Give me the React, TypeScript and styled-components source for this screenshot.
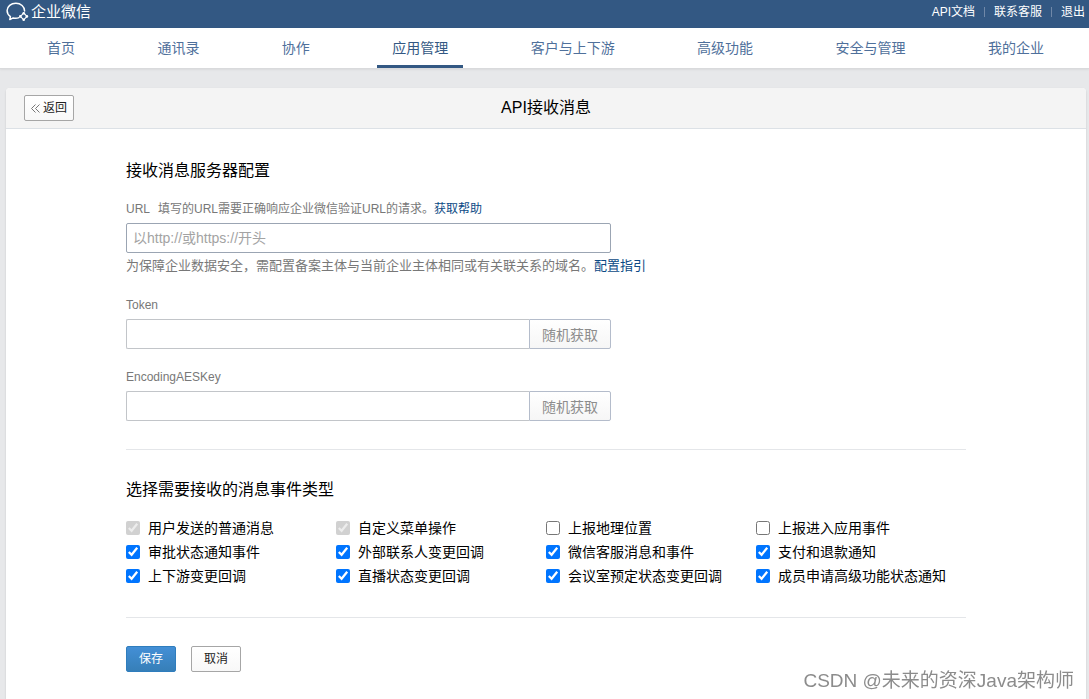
import React from "react";
import styled, { createGlobalStyle, css } from "styled-components";

const GlobalStyle = createGlobalStyle`
  *, *::before, *::after { box-sizing: border-box; }
  body {
    margin: 0;
    background: #e7e8ea;
    color: #000;
    font-family: "Liberation Sans", "Noto Sans CJK SC", sans-serif;
    font-size: 14px;
  }
  button, input { font-family: inherit; }
  a { text-decoration: none; }
`;

const Page = styled.div`
  min-height: 100vh;
  display: flex;
  flex-direction: column;
`;

const TopBar = styled.header`
  height: 28px;
  padding: 0 4px 4px 6px;
  display: flex;
  align-items: center;
  justify-content: space-between;
  background: #335883;
  color: #fff;
`;

const Brand = styled.a`
  display: flex;
  align-items: center;
  gap: 2px;
  color: #fff;
  font-size: 15px;
  line-height: 24px;
`;

const TopLinks = styled.nav`
  display: flex;
  align-items: center;
  gap: 9px;
  font-size: 12px;
  line-height: 24px;
`;

const TopLink = styled.a`
  color: #fff;
`;

const Separator = styled.span`
  width: 1px;
  height: 10px;
  background: #7088a8;
`;

const MainNav = styled.nav`
  height: 41px;
  padding: 0 30px 0 32px;
  display: flex;
  justify-content: space-between;
  background: #fff;
  border-bottom: 1px solid #d9dadc;
  box-shadow: 0 1px 2px rgba(0, 0, 0, 0.06);
`;

const NavLink = styled.a<{ $active?: boolean }>`
  padding: 0 15px;
  line-height: 40px;
  color: #4f709b;
  white-space: nowrap;
  ${(p) =>
    p.$active &&
    css`
      color: #335883;
      box-shadow: inset 0 -3px #335883;
    `}
`;

const Panel = styled.main`
  flex: 1;
  margin: 19px 3px 0 6px;
  background: #fff;
  border-radius: 4px 4px 0 0;
  box-shadow: 0 1px 2px rgba(0, 0, 0, 0.15);
`;

const PanelHeader = styled.div`
  height: 41px;
  padding: 0 18px;
  display: grid;
  grid-template-columns: 1fr auto 1fr;
  align-items: center;
  background: #f4f4f4;
  border-bottom: 1px solid #dce1e6;
  border-radius: 4px 4px 0 0;
`;

const Title = styled.h1`
  margin: 0;
  font-size: 16px;
  font-weight: 400;
  line-height: 24px;
`;

const Button = styled.button<{ $primary?: boolean }>`
  width: 50px;
  height: 26px;
  padding: 0;
  display: flex;
  align-items: center;
  justify-content: center;
  gap: 3px;
  font-size: 12px;
  line-height: 24px;
  border-radius: 2px;
  color: ${(p) => (p.$primary ? "#fff" : "#222")};
  border: 1px solid ${(p) => (p.$primary ? "#2f7dbd" : "#a6a6a6")};
  background: ${(p) =>
    p.$primary
      ? "linear-gradient(#438fd6, #367fb8)"
      : "linear-gradient(#fff, #f8f8f8)"};
`;

const Content = styled.form`
  max-width: 840px;
  margin: 0 auto;
  padding: 30px 0 24px;
`;

const Section = styled.section`
  padding-bottom: 28px;
  margin-bottom: 28px;
  border-bottom: 1px solid #e4e6e9;
`;

const SectionTitle = styled.h2`
  margin: 0;
  font-size: 16px;
  font-weight: 400;
  line-height: 24px;
`;

const Field = styled.div`
  margin-top: 18px;
`;

const UrlField = styled.div`
  margin: 16px 0 19px;
`;

const FieldHead = styled.div`
  margin-bottom: 4px;
  display: flex;
  font-size: 12px;
  line-height: 20px;
  color: #787878;
`;

const FieldLabel = styled.label`
  margin-right: 8px;
`;

const TextLink = styled.a`
  color: #0c4a85;
`;

const InputRow = styled.div`
  max-width: 485px;
  display: flex;
`;

const TextInput = styled.input<{ $joined?: boolean }>`
  flex: 1;
  min-width: 0;
  height: 30px;
  padding: 0 6px;
  font-size: 14px;
  background: #fff;
  border: 1px solid ${(p) => (p.$joined ? "#c2c5c9" : "#9ba5b3")};
  border-radius: ${(p) => (p.$joined ? "2px 0 0 2px" : "2px")};
  ${(p) => p.$joined && "border-right: 0;"}
  &::placeholder { color: #a3a3a3; opacity: 1; }
`;

const JoinedButton = styled.button`
  width: 82px;
  height: 30px;
  padding: 0;
  font-size: 14px;
  color: #8d8d8d;
  border: 1px solid #b4bccb;
  border-radius: 0 2px 2px 0;
  background: linear-gradient(#fff, #f6f6f6);
`;

const Hint = styled.p`
  margin: 3px 0 0;
  font-size: 13px;
  line-height: 20px;
  color: #787878;
`;

const EventGrid = styled.div`
  margin-top: 14px;
  padding-bottom: 1px;
  display: grid;
  grid-template-columns: repeat(4, 1fr);
`;

const EventOption = styled.label`
  display: flex;
  align-items: center;
  gap: 8px;
  line-height: 24px;
  white-space: nowrap;
`;

const Checkbox = styled.input`
  width: 14px;
  height: 14px;
  margin: 0;
  flex: none;
`;

const Actions = styled.div`
  display: flex;
  gap: 15px;
`;

const Watermark = styled.div`
  position: fixed;
  right: 15px;
  bottom: 4px;
  font-size: 19px;
  line-height: 28px;
  color: #8c8c8c;
  pointer-events: none;
`;

const navItems = ["首页", "通讯录", "协作", "应用管理", "客户与上下游", "高级功能", "安全与管理", "我的企业"];

const events = [
  { name: "用户发送的普通消息", checked: true, disabled: true },
  { name: "自定义菜单操作", checked: true, disabled: true },
  { name: "上报地理位置", checked: false },
  { name: "上报进入应用事件", checked: false },
  { name: "审批状态通知事件", checked: true },
  { name: "外部联系人变更回调", checked: true },
  { name: "微信客服消息和事件", checked: true },
  { name: "支付和退款通知", checked: true },
  { name: "上下游变更回调", checked: true },
  { name: "直播状态变更回调", checked: true },
  { name: "会议室预定状态变更回调", checked: true },
  { name: "成员申请高级功能状态通知", checked: true },
];

const LogoIcon = () => (
  <svg width="23" height="20" viewBox="0 0 23 20" fill="none" stroke="#fff" aria-hidden="true">
    <path
      d="M18.6 9C18.6 4.6 14.8 1.2 9.9 1.2C5 1.2 1.1 4.4 1.1 8.6C1.1 11.1 2.4 13.3 4.4 14.7L3.8 17.6L7.2 15.9C9.4 16.4 11.3 16.2 13 15.6"
      strokeWidth="1.5"
      strokeLinecap="round"
      strokeLinejoin="round"
    />
    <path d="M17.7 11L21 14.4L17.7 17.8L14.4 14.4Z" strokeWidth="1.1" />
    <g fill="#fff" stroke="none">
      <circle cx="17.7" cy="11.2" r="1.3" />
      <circle cx="20.9" cy="14.4" r="1.3" />
      <circle cx="17.7" cy="17.8" r="1.3" />
      <circle cx="14.3" cy="14.4" r="1.3" />
    </g>
  </svg>
);

const BackIcon = () => (
  <svg width="9" height="9" viewBox="0 0 9 9" fill="none" stroke="#777" aria-hidden="true">
    <path d="M4.5 0.5L0.5 4.5L4.5 8.5M8.5 0.5L4.5 4.5L8.5 8.5" />
  </svg>
);

const SecretField = ({ id, label }: { id: string; label: string }) => (
  <Field>
    <FieldHead>
      <FieldLabel htmlFor={id}>{label}</FieldLabel>
    </FieldHead>
    <InputRow>
      <TextInput id={id} type="text" $joined />
      <JoinedButton type="button">随机获取</JoinedButton>
    </InputRow>
  </Field>
);

export default function App() {
  return (
    <Page>
      <GlobalStyle />
      <TopBar>
        <Brand href="#">
          <LogoIcon />
          企业微信
        </Brand>
        <TopLinks>
          <TopLink href="#">API文档</TopLink>
          <Separator />
          <TopLink href="#">联系客服</TopLink>
          <Separator />
          <TopLink href="#">退出</TopLink>
        </TopLinks>
      </TopBar>
      <MainNav>
        {navItems.map((item) => (
          <NavLink key={item} href="#" $active={item === "应用管理"}>
            {item}
          </NavLink>
        ))}
      </MainNav>
      <Panel>
        <PanelHeader>
          <Button type="button">
            <BackIcon />
            返回
          </Button>
          <Title>API接收消息</Title>
        </PanelHeader>
        <Content>
          <Section>
            <SectionTitle>接收消息服务器配置</SectionTitle>
            <UrlField>
              <FieldHead>
                <FieldLabel htmlFor="url">URL</FieldLabel>
                <span>填写的URL需要正确响应企业微信验证URL的请求。</span>
                <TextLink href="#">获取帮助</TextLink>
              </FieldHead>
              <InputRow>
                <TextInput id="url" type="text" placeholder="以http://或https://开头" />
              </InputRow>
              <Hint>
                为保障企业数据安全，需配置备案主体与当前企业主体相同或有关联关系的域名。
                <TextLink href="#">配置指引</TextLink>
              </Hint>
            </UrlField>
            <SecretField id="token" label="Token" />
            <SecretField id="aes-key" label="EncodingAESKey" />
          </Section>
          <Section>
            <SectionTitle>选择需要接收的消息事件类型</SectionTitle>
            <EventGrid>
              {events.map((e) => (
                <EventOption key={e.name}>
                  <Checkbox type="checkbox" defaultChecked={e.checked} disabled={e.disabled} />
                  {e.name}
                </EventOption>
              ))}
            </EventGrid>
          </Section>
          <Actions>
            <Button type="button" $primary>
              保存
            </Button>
            <Button type="button">取消</Button>
          </Actions>
        </Content>
      </Panel>
      <Watermark>CSDN @未来的资深Java架构师</Watermark>
    </Page>
  );
}
